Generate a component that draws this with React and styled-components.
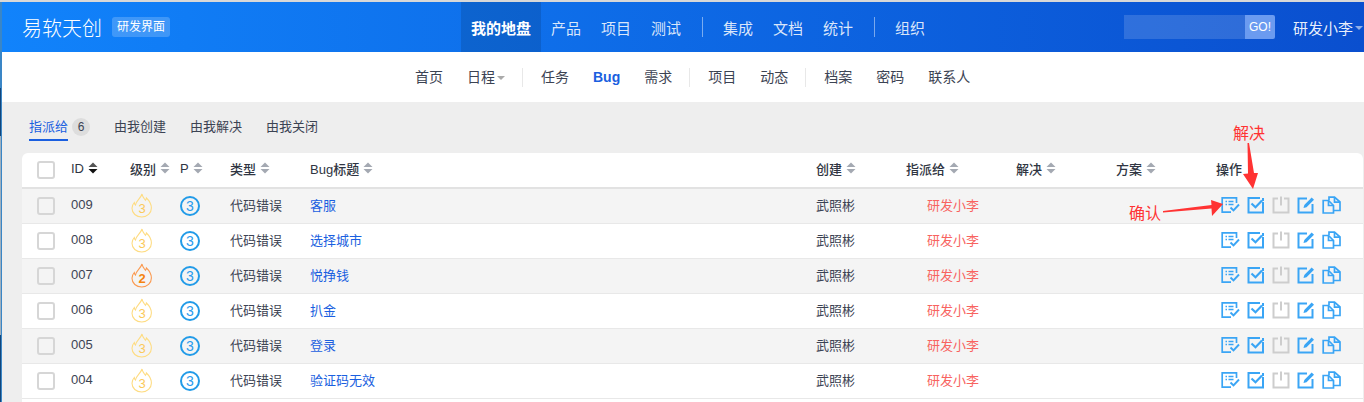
import React from 'react';
import styled, { createGlobalStyle } from 'styled-components';

const Global = createGlobalStyle`
  html, body { margin: 0; padding: 0; background: #eee; overflow: hidden; }
  body { font-family: "Liberation Sans", "Noto Sans CJK SC", sans-serif; font-size: 13px; color: #3c4353; }
`;

const Page = styled.div`
  position: relative;
  width: 1364px;
  height: 402px;
  overflow: hidden;
  box-sizing: border-box;
  border-top: 2px solid #d8d8d8;
  padding-left: 2px;
  background: #eee;
  &::before {
    content: '';
    position: absolute;
    left: 0;
    top: 0;
    width: 1px;
    height: 400px;
    border-right: 1px solid #3a86c6;
    background: linear-gradient(#3a86c6 0 86px, #12457a 86px 134px, #9fb0bf 134px 333px, #12457a 333px);
  }
`;

const Header = styled.header`
  height: 50px;
  display: grid;
  grid-template-columns: 459px auto 1fr auto;
  align-items: stretch;
  background: linear-gradient(90deg, #1183fb, #0a4fcf);
  color: #fff;
`;

const Brand = styled.div`
  display: flex;
  align-items: center;
  padding-left: 20px;
  gap: 10px;
`;

const BrandName = styled.span`
  font-size: 20px;
  font-weight: 300;
`;

const BrandTag = styled.span`
  font-size: 12px;
  line-height: 20px;
  height: 20px;
  padding: 0 5px;
  border-radius: 3px;
  background: rgba(255, 255, 255, 0.2);
`;

const MainNav = styled.nav`
  display: flex;
  align-items: stretch;
`;

const MainItem = styled.a`
  display: flex;
  align-items: center;
  padding: 0 10px;
  font-size: 15px;
  color: ${p => (p.$active ? '#fff' : 'rgba(255,255,255,.85)')};
  font-weight: ${p => (p.$active ? 700 : 400)};
  background: ${p => (p.$active ? 'rgba(0,0,0,.12)' : 'transparent')};
`;

const MainDivider = styled.i`
  align-self: center;
  width: 1px;
  height: 20px;
  margin: 0 10px 0 11px;
  background: rgba(255, 255, 255, 0.45);
`;

const Right = styled.div`
  grid-column: 4;
  display: flex;
  align-items: center;
  padding-right: 1px;
`;

const SearchBox = styled.div`
  width: 121px;
  height: 24px;
  background: rgba(255, 255, 255, 0.15);
`;

const GoButton = styled.span`
  width: 30px;
  height: 24px;
  line-height: 24px;
  text-align: center;
  font-size: 12px;
  border-radius: 0 2px 2px 0;
  background: #6b9bf0;
`;

const User = styled.span`
  display: flex;
  align-items: center;
  gap: 2px;
  margin-left: 18px;
  font-size: 15px;
  color: rgba(255, 255, 255, 0.92);
`;

const Caret = styled.i`
  display: inline-block;
  width: 0;
  height: 0;
  margin-top: 2px;
  border-left: 4px solid transparent;
  border-right: 4px solid transparent;
  border-top: 4px solid ${p => p.$color || 'rgba(255,255,255,.55)'};
`;

const SubNav = styled.nav`
  height: 50px;
  display: flex;
  align-items: center;
  background: #fff;
  padding-left: 401px;
`;

const SubItem = styled.a`
  display: flex;
  align-items: center;
  gap: 2px;
  padding: 0 12px;
  font-size: 14px;
  line-height: 20px;
  color: ${p => (p.$active ? '#1a5fe0' : '#3c4353')};
  font-weight: ${p => (p.$active ? 700 : 400)};
`;

const SubDivider = styled.i`
  width: 1px;
  height: 19px;
  margin: 0 6px 0 5px;
  background: #e8e8e8;
`;

const Tabs = styled.div`
  height: 51px;
  display: flex;
  align-items: center;
  padding: 0 0 1px 27px;
  box-sizing: border-box;
  gap: 24px;
`;

const Tab = styled.a`
  position: relative;
  display: flex;
  align-items: center;
  gap: 4px;
  font-size: 13px;
  line-height: 18px;
  color: ${p => (p.$active ? '#1a5fe0' : '#3c4353')};
  font-weight: 400;
  ${p => p.$active && `
    &::after {
      content: '';
      position: absolute;
      left: 0;
      bottom: -5px;
      width: 39px;
      height: 2px;
      background: #1a5fe0;
    }
  `}
`;

const Count = styled.span`
  width: 18px;
  height: 18px;
  line-height: 18px;
  border-radius: 50%;
  text-align: center;
  font-size: 12px;
  background: #ddd;
  color: #3c4353;
`;

const Card = styled.section`
  margin-left: 20px;
  margin-right: 1px;
  min-height: 260px;
  background: #fff;
  border-radius: 6px 6px 0 0;
`;

const Columns = styled.div`
  display: grid;
  grid-template-columns: 49px 59px 50px 50px 80px 506px 90px 110px 100px 100px 1fr;
  align-items: center;
`;

const HeadRow = styled(Columns)`
  height: 34px;
  border-bottom: 2px solid #e2e2e2;
  font-size: 13px;
  color: #2f3542;
`;

const Row = styled(Columns)`
  height: 34px;
  border-bottom: 1px solid #e8e8e8;
  background: ${p => (p.$striped ? '#f4f4f4' : '#fff')};
  font-size: 13px;
`;

const CheckCell = styled.div`
  padding-left: 15px;
  padding-bottom: 1px;
  display: flex;
`;

const CheckBox = styled.span`
  width: 14px;
  height: 14px;
  border: 2px solid #d6d6d6;
  border-radius: 3px;
  background: ${p => (p.$striped ? '#f4f4f4' : '#fff')};
`;

const HeadCell = styled.div`
  display: flex;
  align-items: center;
  gap: 4px;
  white-space: nowrap;
  font-weight: 500;
  padding-bottom: 4px;
`;

const Cell = styled.div`
  white-space: nowrap;
  color: ${p => p.$color || '#3c4353'};
  padding-left: ${p => p.$indent || 0}px;
  padding-bottom: 3px;
`;

const IconCell = styled.div`
  display: flex;
  padding-left: ${p => p.$indent || 0}px;
  padding-bottom: ${p => p.$lift || 0}px;
`;

const Actions = styled.div`
  display: flex;
  gap: 7px;
  margin-left: 5px;
  padding-bottom: 2px;
`;

const Callout = styled.span`
  position: absolute;
  left: ${p => p.$x}px;
  top: ${p => p.$y}px;
  color: #f33;
  font-size: 16px;
  line-height: 20px;
`;

const Overlay = styled.svg`
  position: absolute;
  left: 0;
  top: -2px;
  pointer-events: none;
`;

const Sort = ({ active }) => (
  <svg width="10" height="12" viewBox="0 0 10 12">
    <path d="M5 0.5 9.5 5H.5z" fill={active ? '#555' : '#a4a9b2'} />
    <path d="M5 11.5 .5 7h9z" fill={active ? '#111' : '#a4a9b2'} />
  </svg>
);

const Flame = ({ level }) => {
  const color = level === 2 ? '#fb9a50' : '#fedc82';
  const text = level === 2 ? '#f5840f' : '#fbc95a';
  return (
    <svg width="22" height="25" viewBox="0 0 22 25">
      <path
        d="M11 1c.6 3.2 2.2 4.6 3.4 6.3.6-.6.9-1.3 1-2.3 2.700 2.500 5 5.800 5 10 0 5.200-4.200 9-9.600 9C5.200 24 1 20.300 1 15.300c0-2.300 1-4.400 2.300-5.800.1 1.100.5 1.900 1.200 2.500C5.100 7.800 9.600 5.600 11 1z"
        fill="none"
        stroke={color}
        strokeWidth="1.100"
      />
      <text x="11" y="20" textAnchor="middle" fontSize="13" fontWeight={level === 2 ? 700 : 400} fill={text} fontFamily="Liberation Sans, sans-serif">{level}</text>
    </svg>
  );
};

const Pri = () => (
  <svg width="20" height="20" viewBox="0 0 20 20">
    <circle cx="10" cy="10" r="9" fill="none" stroke="#229be8" strokeWidth="2" />
    <text x="10" y="14.500" textAnchor="middle" fontSize="14" fill="#2a9bee" fontFamily="Liberation Sans, sans-serif">3</text>
  </svg>
);

const blue = '#3aa5f5';

const ConfirmIcon = () => (
  <svg width="19" height="18" viewBox="0 0 19 18" fill="none" stroke={blue} strokeWidth="1.700">
    <path d="M15.500 7V1.800H1.200v14.400H10" />
    <path d="M4.500 5.500h1.500M7.500 5.500h5M4.500 8.500h1.500M7.500 8.500h5" strokeWidth="1.300" />
    <path d="M9.500 11.500l3 3 5.500-6" strokeWidth="1.900" />
  </svg>
);

const ResolveIcon = () => (
  <svg width="18" height="18" viewBox="0 0 18 18" fill="none" stroke={blue} strokeWidth="2">
    <path d="M13 2H1.500v14.500h14.500V6" />
    <path d="M16 2v3" />
    <path d="M4.500 7.500l4 3.800L15 4.500" strokeWidth="2.200" />
  </svg>
);

const CloseIcon = () => (
  <svg width="18" height="18" viewBox="0 0 18 18" fill="none" stroke="#cdcdcd" strokeWidth="2">
    <path d="M6 2.500H1.500v14h15v-14h-4.500" />
    <path d="M9 0.500v9" />
  </svg>
);

const EditIcon = () => (
  <svg width="18" height="18" viewBox="0 0 18 18" fill="none" stroke={blue} strokeWidth="2">
    <path d="M10 2.500H1.500v14h14V8" />
    <path d="M6.500 12l.8-3 7.400-7.500 2.300 2.200-7.500 7.500z" fill={blue} stroke="none" />
  </svg>
);

const CopyIcon = () => (
  <svg width="19" height="18" viewBox="0 0 19 18" fill="none" stroke={blue} strokeWidth="1.700">
    <path d="M6.500 4.500H1.200v12.500h10.300V9.500z" />
    <path d="M6.500 4.500v5h5" />
    <path d="M7 4V1.200h5.500l5.500 4.800v8.500h-6.500" />
    <path d="M12.500 1.200v5H18" />
  </svg>
);

const head = [
  ['ID', true], ['级别'], ['P'], ['类型'], ['Bug标题'], ['创建'], ['指派给'], ['解决'], ['方案'],
];

const rows = [
  ['009', 3, '客服'],
  ['008', 3, '选择城市'],
  ['007', 2, '悦挣钱'],
  ['006', 3, '扒金'],
  ['005', 3, '登录'],
  ['004', 3, '验证码无效'],
];

export default function App() {
  return (
    <>
      <Global />
      <Page>
        <Header>
          <Brand>
            <BrandName>易软天创</BrandName>
            <BrandTag>研发界面</BrandTag>
          </Brand>
          <MainNav>
            <MainItem $active>我的地盘</MainItem>
            <MainItem>产品</MainItem>
            <MainItem>项目</MainItem>
            <MainItem>测试</MainItem>
            <MainDivider />
            <MainItem>集成</MainItem>
            <MainItem>文档</MainItem>
            <MainItem>统计</MainItem>
            <MainDivider />
            <MainItem>组织</MainItem>
          </MainNav>
          <Right>
            <SearchBox />
            <GoButton>GO!</GoButton>
            <User>研发小李<Caret /></User>
          </Right>
        </Header>
        <SubNav>
          <SubItem>首页</SubItem>
          <SubItem>日程<Caret $color="#aaa" /></SubItem>
          <SubDivider />
          <SubItem>任务</SubItem>
          <SubItem $active>Bug</SubItem>
          <SubItem>需求</SubItem>
          <SubDivider />
          <SubItem>项目</SubItem>
          <SubItem>动态</SubItem>
          <SubDivider />
          <SubItem>档案</SubItem>
          <SubItem>密码</SubItem>
          <SubItem>联系人</SubItem>
        </SubNav>
        <Tabs>
          <Tab $active>指派给<Count>6</Count></Tab>
          <Tab>由我创建</Tab>
          <Tab>由我解决</Tab>
          <Tab>由我关闭</Tab>
        </Tabs>
        <Card>
          <HeadRow>
            <CheckCell><CheckBox /></CheckCell>
            {head.map(([label, active]) => (
              <HeadCell key={label}>{label}<Sort active={active} /></HeadCell>
            ))}
            <HeadCell>操作</HeadCell>
          </HeadRow>
          {rows.map(([id, level, title], i) => {
            const striped = i % 2 === 0;
            return (
              <Row key={id} $striped={striped}>
                <CheckCell><CheckBox $striped={striped} /></CheckCell>
                <Cell>{id}</Cell>
                <IconCell $indent={1} $lift={2}><Flame level={level} /></IconCell>
                <IconCell><Pri /></IconCell>
                <Cell>代码错误</Cell>
                <Cell $color="#1a5fe0">{title}</Cell>
                <Cell>武照彬</Cell>
                <Cell $color="#f8635f" $indent={21}>研发小李</Cell>
                <Cell />
                <Cell />
                <Actions>
                  <ConfirmIcon />
                  <ResolveIcon />
                  <CloseIcon />
                  <EditIcon />
                  <CopyIcon />
                </Actions>
              </Row>
            );
          })}
        </Card>
        <Overlay width="1364" height="402" viewBox="0 0 1364 402">
          <path d="M1247.500 143 L1249 143 L1254 173 L1258 173 L1253 189 L1243 174 L1248 173.500 Z" fill="#f33" />
          <path d="M1163 211 L1211.500 205 L1211 200 L1223 204 L1212 216 L1211.500 208.500 L1163 212.500 Z" fill="#f33" />
        </Overlay>
        <Callout $x={1233} $y={122}>解决</Callout>
        <Callout $x={1129} $y={202}>确认</Callout>
      </Page>
    </>
  );
}
